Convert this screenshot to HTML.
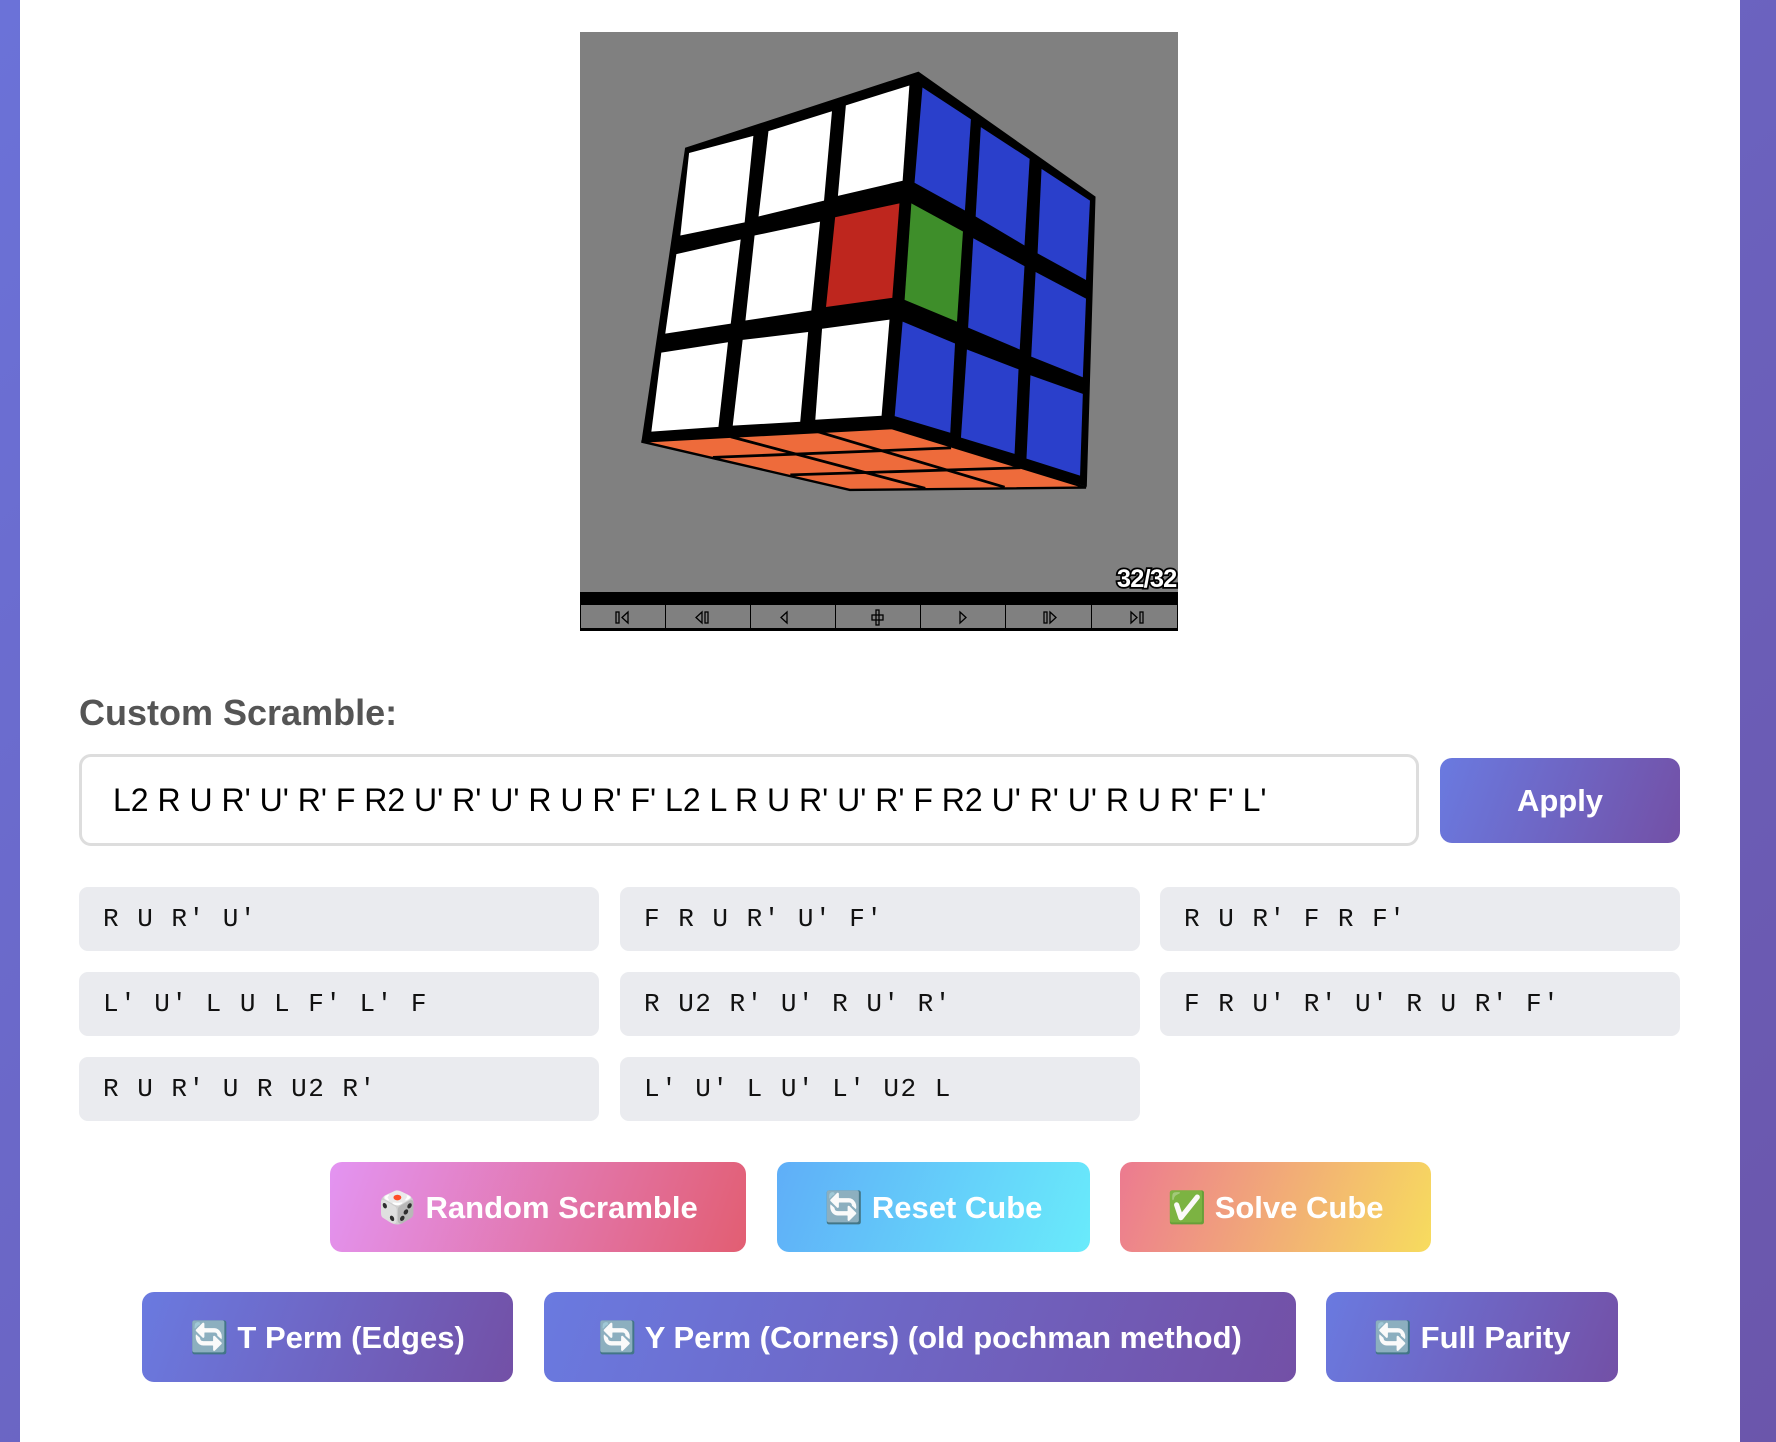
<!DOCTYPE html>
<html><head><meta charset="utf-8"><style>
*{box-sizing:border-box;margin:0;padding:0}
body{width:1776px;height:1442px;overflow:hidden;background:linear-gradient(135deg,#6b72d8,#6b56ab);font-family:"Liberation Sans",Arial,sans-serif;position:relative}
.main{position:absolute;left:20px;top:0;width:1720px;height:1442px;background:#fff}
.abs{position:absolute}
.viewer{left:580px;top:32px;width:598px;height:599px;background:#808080}
.ctrl{left:580px;top:592px;width:598px;height:39px;background:#000}
.cb{position:absolute;top:13px;height:24px;background:#808080;border:1px solid #000;border-top:none}
.label{left:79px;top:692px;font-size:36px;font-weight:bold;color:#555}
.inp{left:79px;top:754px;width:1340px;height:92px;border:3px solid #ddd;border-radius:12px;font-size:32px;color:#000;padding-left:31px;line-height:86px;letter-spacing:0}
.btn{position:absolute;color:#fff;font-weight:bold;font-size:31px;border-radius:12px;display:flex;align-items:center;justify-content:center;background:linear-gradient(110deg,#6a7ae0,#7350a6)}
.alg{position:absolute;width:520px;height:64px;background:#eaebef;border-radius:9px;font-family:"Liberation Mono","DejaVu Sans Mono",monospace;font-size:26px;line-height:64px;padding-left:24px;letter-spacing:1.5px;color:#111}
</style></head><body>
<div class="main"></div>
<div class="abs viewer"></div>
<svg class="abs" style="left:570px;top:20px" width="620" height="620" viewBox="0 0 1562 1562">
<polygon points="180,1062 810,1028 1300,1178 705,1184" fill="#ee6b3b" stroke="#000" stroke-width="6"/>
<g stroke="#000" stroke-width="7" fill="none">
<line x1="405" y1="1050" x2="895" y2="1180"/>
<line x1="620" y1="1036" x2="1095" y2="1177"/>
<line x1="360" y1="1102" x2="960" y2="1078"/>
<line x1="555" y1="1146" x2="1135" y2="1128"/>
</g>
<polygon points="290,322 878,130 1324,445 1302,1176 810,1028 180,1062" fill="#000"/>
<g fill="#fff">
<polygon points="300,335 462,292 440,510 278,543"/>
<polygon points="500,280 660,230 640,455 475,495"/>
<polygon points="695,215 855,165 838,405 675,443"/>
<polygon points="268,590 430,553 405,765 240,790"/>
<polygon points="465,543 630,508 608,732 442,757"/>
<polygon points="230,838 398,812 374,1025 205,1037"/>
<polygon points="435,806 600,786 580,1012 410,1022"/>
<polygon points="635,778 805,755 785,997 618,1007"/>
</g>
<polygon points="668,497 830,462 812,700 645,723" fill="#be261e"/>
<polygon points="860,462 990,533 975,760 843,705" fill="#3e8e2a"/>
<g fill="#2a3fcb">
<polygon points="888,170 1010,250 995,480 868,410"/>
<polygon points="1035,270 1158,350 1145,568 1022,495"/>
<polygon points="1188,375 1310,455 1300,655 1178,588"/>
<polygon points="1016,550 1145,620 1133,830 1003,775"/>
<polygon points="1173,635 1300,702 1292,900 1162,848"/>
<polygon points="838,760 970,815 958,1040 818,998"/>
<polygon points="1000,830 1130,880 1120,1093 985,1052"/>
<polygon points="1160,895 1292,942 1285,1148 1150,1105"/>
</g>
<text x="1528" y="1428" text-anchor="end" font-family="Liberation Sans" font-weight="bold" font-size="64" fill="#fff" stroke="#000" stroke-width="9" paint-order="stroke" letter-spacing="-2">32/32</text>
</svg>
<div class="abs ctrl">
<div class="cb" style="left:0;width:86px"></div><div class="cb" style="left:85px;width:86px"></div><div class="cb" style="left:170px;width:86px"></div><div class="cb" style="left:255px;width:86px"></div><div class="cb" style="left:340px;width:86px"></div><div class="cb" style="left:425px;width:87px"></div><div class="cb" style="left:511px;width:87px"></div>
<svg class="abs" style="left:0;top:13px" width="598" height="26" viewBox="0 0 598 26" fill="none" stroke="#000" stroke-width="1.3">
<rect x="36" y="7" width="3" height="11"/><path d="M48 7 L42 12.5 L48 18Z"/>
<path d="M122 7 L116 12.5 L122 18Z"/><rect x="125" y="7" width="3" height="11"/>
<path d="M207 7 L201 12.5 L207 18Z"/>
<rect x="296" y="5" width="3" height="15"/><rect x="292" y="10" width="11" height="5"/>
<path d="M380 7 L386 12.5 L380 18Z"/>
<rect x="464" y="7" width="3" height="11"/><path d="M470 7 L476 12.5 L470 18Z"/>
<path d="M551 7 L557 12.5 L551 18Z"/><rect x="560" y="7" width="3" height="11"/>
</svg>
</div>
<div class="abs label">Custom Scramble:</div>
<div class="abs inp">L2 R U R' U' R' F R2 U' R' U' R U R' F' L2 L R U R' U' R' F R2 U' R' U' R U R' F' L'</div>
<div class="btn" style="left:1440px;top:758px;width:240px;height:85px">Apply</div>
<div class="alg" style="left:79px;top:887px">R U R' U'</div>
<div class="alg" style="left:620px;top:887px">F R U R' U' F'</div>
<div class="alg" style="left:1160px;top:887px">R U R' F R F'</div>
<div class="alg" style="left:79px;top:972px">L' U' L U L F' L' F</div>
<div class="alg" style="left:620px;top:972px">R U2 R' U' R U' R'</div>
<div class="alg" style="left:1160px;top:972px">F R U' R' U' R U R' F'</div>
<div class="alg" style="left:79px;top:1057px">R U R' U R U2 R'</div>
<div class="alg" style="left:620px;top:1057px">L' U' L U' L' U2 L</div>
<div class="btn" style="left:330px;top:1162px;width:416px;height:90px;background:linear-gradient(110deg,#e394f2,#e25e72)">🎲 Random Scramble</div>
<div class="btn" style="left:777px;top:1162px;width:313px;height:90px;background:linear-gradient(110deg,#5faef8,#69ebfb)">🔄 Reset Cube</div>
<div class="btn" style="left:1120px;top:1162px;width:311px;height:90px;background:linear-gradient(110deg,#ec7a90,#f7dc5e)">✅ Solve Cube</div>
<div class="btn" style="left:142px;top:1292px;width:371px;height:90px">🔄 T Perm (Edges)</div>
<div class="btn" style="left:544px;top:1292px;width:752px;height:90px">🔄 Y Perm (Corners) (old pochman method)</div>
<div class="btn" style="left:1326px;top:1292px;width:292px;height:90px">🔄 Full Parity</div>
</body></html>
